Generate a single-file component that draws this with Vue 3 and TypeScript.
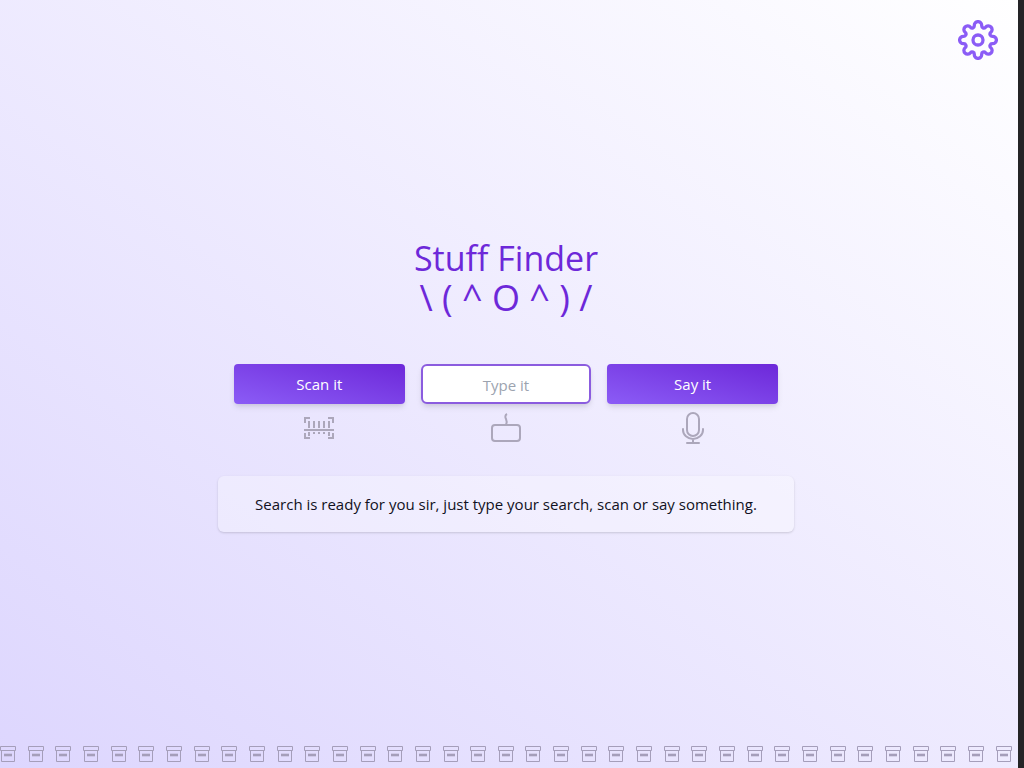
<script setup lang="ts">
import { ref } from 'vue'

const query = ref<string>('')
const status = ref<string>('Search is ready for you sir, just type your search, scan or say something.')
const boxCount = 37

// Outline of a cog: round teeth joined by round valleys, centred on 0,0.
function cogPath(teeth: number): string {
  const point = (x: number, y: number, turn: number): string => {
    const c = Math.cos(turn)
    const s = Math.sin(turn)
    return `${(x * c - y * s).toFixed(2)} ${(x * s + y * c).toFixed(2)}`
  }
  let d = `M${point(-3.67, -14.22, 0)}`
  for (let i = 0; i < teeth; i++) {
    const turn = (i * 2 * Math.PI) / teeth
    const next = ((i + 1) * 2 * Math.PI) / teeth
    d += `A3.7 3.7 0 1 1 ${point(3.67, -14.22, turn)}`
    d += `A2.2 2.2 0 0 0 ${point(-3.67, -14.22, next)}`
  }
  return d + 'Z'
}

const cog = cogPath(8)
</script>

<template>
  <div class="page">
    <button class="settings" type="button" aria-label="Settings">
      <svg viewBox="-20 -20 40 40" width="40" height="40" fill="none" stroke="currentColor" stroke-width="3.3" stroke-linejoin="round">
        <path :d="cog" />
        <circle r="5" />
      </svg>
    </button>

    <main class="content">
      <h1 class="title">
        <span class="name">Stuff Finder</span>
        <span class="face">\ ( ^ O ^ ) /</span>
      </h1>

      <div class="options">
        <div class="option">
          <button class="action" type="button">Scan it</button>
          <svg class="icon" viewBox="0 0 32 32" fill="none" stroke="currentColor" stroke-width="2">
            <path d="M2 11V6h5M25 6h5v5M2 21v5h5M25 26h5v-5M1 18h30M6 9v7M11 9v7M16 9v7M21 9v7M26 9v7M6 20v4M11 20v2M16 20v2M21 20v2M26 20v4" />
          </svg>
        </div>
        <div class="option">
          <input v-model="query" class="field" type="text" placeholder="Type it" aria-label="Type it" />
          <svg class="icon" viewBox="0 0 32 32" fill="none" stroke="currentColor" stroke-width="2">
            <rect x="2" y="13" width="28" height="16" rx="3" />
            <path d="M17 2c-2 1-2 3-1 5s1 4 0 6" />
          </svg>
        </div>
        <div class="option">
          <button class="action" type="button">Say it</button>
          <svg class="icon" viewBox="0 0 32 32" fill="none" stroke="currentColor" stroke-width="2" stroke-linecap="round">
            <rect x="10" y="1" width="12" height="23" rx="6" />
            <path d="M6 17v1a10 9 0 0 0 20 0v-1M16 27v4M10 31h12" />
          </svg>
        </div>
      </div>

      <p class="status" role="status">{{ status }}</p>
    </main>

    <div class="shelf" aria-hidden="true">
      <svg v-for="n in boxCount" :key="n" class="box" viewBox="0 0 16 16" fill="none" stroke="currentColor">
        <path d="M.5.5h15v4H.5zM1.500 4.500h13v11h-13z" />
        <path d="M4 9h8" stroke-width="2.6" />
      </svg>
    </div>
  </div>
</template>

<style>
body {
  margin: 0;
}
</style>

<style scoped>
.page {
  position: relative;
  box-sizing: border-box;
  min-height: 100vh;
  padding-right: 6px;
  border-right: 6px solid #242426;
  display: flex;
  flex-direction: column;
  background: linear-gradient(to top right, #ddd6fe, #ffffff);
  font-family: "Segoe UI", "Open Sans", "Noto Sans", sans-serif;
  color: #111122;
  overflow: hidden;
}

.settings {
  position: absolute;
  top: 20px;
  right: 20px;
  padding: 0;
  border: 0;
  background: none;
  color: #8b5cf6;
  cursor: pointer;
}

.settings svg,
.icon,
.box {
  display: block;
}

.content {
  flex: 1;
  box-sizing: border-box;
  width: 100%;
  max-width: 576px;
  margin: 0 auto;
  padding-top: 24px;
  display: flex;
  flex-direction: column;
  justify-content: center;
}

.title {
  margin: 0 0 46px;
  line-height: 40px;
  font-weight: 400;
  text-align: center;
  color: #6d28d9;
}

.name,
.face {
  display: block;
}

.name {
  font-size: 34px;
}

.face {
  font-size: 36px;
}

.options {
  display: grid;
  grid-template-columns: repeat(3, 1fr);
  gap: 16px;
  padding: 0 16px;
}

.option {
  display: flex;
  flex-direction: column;
  align-items: center;
  gap: 8px;
}

.action,
.field {
  box-sizing: border-box;
  width: 100%;
  height: 40px;
  padding: 0 16px;
  border-radius: 4px;
  font-family: inherit;
  font-size: 15px;
  line-height: 24px;
  text-align: center;
  box-shadow: 0 4px 6px -1px rgba(0, 0, 0, 0.1), 0 2px 4px -1px rgba(0, 0, 0, 0.06);
}

.action {
  border: 0;
  background: linear-gradient(to top right, #8b5cf6, #6d28d9);
  color: #ffffff;
  cursor: pointer;
}

.field {
  padding-top: 2px;
  border: 2px solid #8b5cdf;
  border-radius: 6px;
  background: #ffffff;
  color: #111122;
}

.field::placeholder {
  color: #9ca3af;
  opacity: 1;
}

.icon {
  width: 32px;
  height: 32px;
  color: #aca7bb;
}

.status {
  margin: 32px 0 0;
  padding: 16px;
  border-radius: 6px;
  background: rgba(255, 255, 255, 0.3);
  box-shadow: 0 1px 3px rgba(0, 0, 0, 0.1), 0 1px 2px rgba(0, 0, 0, 0.06);
  font-size: 15px;
  line-height: 24px;
  text-align: center;
}

.shelf {
  display: flex;
  justify-content: space-between;
  padding-bottom: 6px;
}

.box {
  width: 16px;
  height: 16px;
  color: #a59eba;
}
</style>
